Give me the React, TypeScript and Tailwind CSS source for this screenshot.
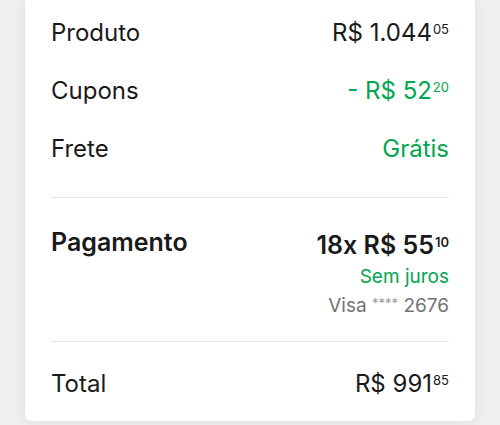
type Price = {
  main: string;
  cents: string;
};

function Amount({ price, className }: { price: Price; className?: string }) {
  return (
    <span className={className}>
      {price.main}
      <sup className="ml-[1px] text-[13px] top-[-7px]">{price.cents}</sup>
    </span>
  );
}

const rows: { label: string; value: React.ReactNode }[] = [
  {
    label: "Produto",
    value: <Amount price={{ main: "R$ 1.044", cents: "05" }} className="text-[#1a1a1a]" />,
  },
  {
    label: "Cupons",
    value: <Amount price={{ main: "- R$ 52", cents: "20" }} className="text-[#00a650]" />,
  },
  {
    label: "Frete",
    value: <span className="text-[#00a650]">Grátis</span>,
  },
];

export default function App() {
  return (
    <div className="h-[425px] w-[500px] overflow-hidden bg-[#efefef] font-['Inter',sans-serif]">
      <div className="mx-[25px] rounded-b-[6px] bg-white px-[26px] pt-[4px] shadow-[0_0_12px_rgba(0,0,0,0.08)]">
        <div className="pb-[19px]">
          {rows.map((row) => (
            <div key={row.label} className="flex h-[58px] items-center justify-between text-[24px] text-[#1a1a1a]">
              <span>{row.label}</span>
              {row.value}
            </div>
          ))}
        </div>

        <div className="border-t border-[#e6e6e6] pt-[28px] pb-[22px]">
          <div className="flex items-start justify-between">
            <span className="text-[25px] leading-[32px] font-semibold text-[#1a1a1a]">Pagamento</span>
            <div className="flex flex-col items-end">
              <Amount
                price={{ main: "18x R$ 55", cents: "10" }}
                className="text-[25px] leading-[38px] font-semibold text-[#1a1a1a]"
              />
              <span className="text-[19px] leading-[26px] text-[#00a650]">Sem juros</span>
              <span className="text-[19px] leading-[26px] text-[#737373]">
                Visa <span className="text-[13px] align-[4px] text-[#9a9a9a]">****</span> 2676
              </span>
            </div>
          </div>
        </div>

        <div className="flex items-center justify-between border-t border-[#e6e6e6] pt-[26px] pb-[21px] text-[24px] leading-[32px] text-[#1a1a1a]">
          <span>Total</span>
          <Amount price={{ main: "R$ 991", cents: "85" }} />
        </div>
      </div>
    </div>
  );
}
